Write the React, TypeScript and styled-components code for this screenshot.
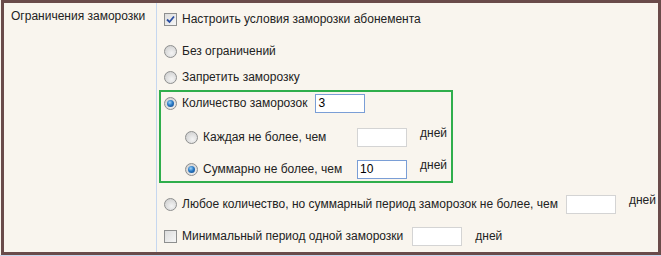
import React from 'react';
import styled, { createGlobalStyle } from 'styled-components';

const GlobalStyle = createGlobalStyle`
  html, body {
    margin: 0;
    padding: 0;
    background: #f9f5ee;
  }
  body {
    font-family: 'Liberation Sans', Arial, sans-serif;
    font-size: 12px;
    color: #222222;
  }
`;

const Page = styled.div`
  width: 661px;
  height: 256px;
  box-sizing: border-box;
  background: #f9f5ee;
  border-bottom: 1px solid #c6d7ef;
`;

const Frame = styled.div`
  margin-left: 1px;
  width: 660px;
  height: 255px;
  box-sizing: border-box;
  border: 3px solid #6a4b4a;
  display: grid;
  grid-template-columns: 152px 1fr;
`;

const LabelCell = styled.div`
  padding: 5px 0 0 7px;
  line-height: 16px;
  white-space: nowrap;
`;

const ContentCell = styled.div`
  border-left: 1px solid #c6d7ef;
  padding-left: 2px;
  display: flex;
  flex-direction: column;
  align-items: flex-start;
`;

const Row = styled.div<{ $top?: number; $indent?: number }>`
  display: flex;
  align-items: center;
  height: 22px;
  margin-top: ${(p) => p.$top ?? 0}px;
  padding-left: ${(p) => p.$indent ?? 5}px;
  white-space: nowrap;
`;

const Group = styled.div`
  margin-top: 2px;
  width: 294px;
  height: 93px;
  box-sizing: border-box;
  border: 2px solid #2fae4c;
  display: flex;
  flex-direction: column;
`;

const Label = styled.span<{ $width?: number }>`
  margin-left: 5px;
  line-height: 16px;
  ${(p) => (p.$width ? `width: ${p.$width}px;` : '')}
`;

const Field = styled.input<{ $filled?: boolean; $gap?: number }>`
  width: 50px;
  height: 19px;
  box-sizing: border-box;
  margin: 0 0 0 ${(p) => p.$gap ?? 8}px;
  padding: 0 2px;
  font: 12px 'Liberation Sans', Arial, sans-serif;
  color: #000;
  background: #ffffff;
  border: 1px solid ${(p) => (p.$filled ? '#7a9ed6' : '#d4d4d4')};
  outline: none;
`;

const Days = styled.span<{ $lift?: boolean }>`
  margin-left: 13px;
  line-height: 15px;
  align-self: ${(p) => (p.$lift ? 'flex-start' : 'center')};
`;

const RadioMark = styled.span<{ $on?: boolean }>`
  position: relative;
  width: 13px;
  height: 13px;
  flex: none;
  box-sizing: border-box;
  border-radius: 50%;
  border: 1px solid #8e8f8f;
  background: radial-gradient(circle at 60% 65%, #f4f4f4 0%, #d6d6d6 70%, #bdbdbd 100%);
  &::after {
    content: '';
    display: ${(p) => (p.$on ? 'block' : 'none')};
    position: absolute;
    left: 2px;
    top: 2px;
    width: 7px;
    height: 7px;
    border-radius: 50%;
    background: radial-gradient(circle at 40% 35%, #9fd3f7 0%, #2b7bc6 45%, #0d3f7e 100%);
  }
`;

const CheckMark = styled.span`
  width: 13px;
  height: 13px;
  flex: none;
  box-sizing: border-box;
  border: 1px solid #8e8f8f;
  background: linear-gradient(135deg, #dcdcdc 0%, #f6f6f6 100%);
  display: flex;
  align-items: center;
  justify-content: center;
`;

const Radio = ({ on }: { on?: boolean }) => <RadioMark $on={on} />;

const Checkbox = ({ checked }: { checked?: boolean }) => (
  <CheckMark>
    {checked ? (
      <svg width="9" height="9" viewBox="0 0 9 9">
        <path d="M1 4.5 L3.5 7 L8 1.5" fill="none" stroke="#2a4da0" strokeWidth="1.8" />
      </svg>
    ) : null}
  </CheckMark>
);

export default function App() {
  return (
    <>
      <GlobalStyle />
      <Page>
        <Frame>
          <LabelCell>Ограничения заморозки</LabelCell>
          <ContentCell>
            <Row $top={5}>
              <Checkbox checked />
              <Label>Настроить условия заморозки абонемента</Label>
            </Row>
            <Row $top={10}>
              <Radio />
              <Label>Без ограничений</Label>
            </Row>
            <Row $top={4}>
              <Radio />
              <Label>Запретить заморозку</Label>
            </Row>
            <Group>
              <Row $indent={3}>
                <Radio on />
                <Label>Количество заморозок</Label>
                <Field $filled defaultValue="3" />
              </Row>
              <Row $top={12} $indent={24}>
                <Radio />
                <Label $width={154}>Каждая не более, чем</Label>
                <Field $gap={0} />
                <Days $lift>дней</Days>
              </Row>
              <Row $top={10} $indent={24}>
                <Radio on />
                <Label $width={154}>Суммарно не более, чем</Label>
                <Field $gap={0} $filled defaultValue="10" />
                <Days $lift>дней</Days>
              </Row>
            </Group>
            <Row $top={10}>
              <Radio />
              <Label>Любое количество, но суммарный период заморозок не более, чем</Label>
              <Field />
              <Days $lift>дней</Days>
            </Row>
            <Row $top={10}>
              <Checkbox />
              <Label>Минимальный период одной заморозки</Label>
              <Field $gap={9} />
              <Days>дней</Days>
            </Row>
          </ContentCell>
        </Frame>
      </Page>
    </>
  );
}
